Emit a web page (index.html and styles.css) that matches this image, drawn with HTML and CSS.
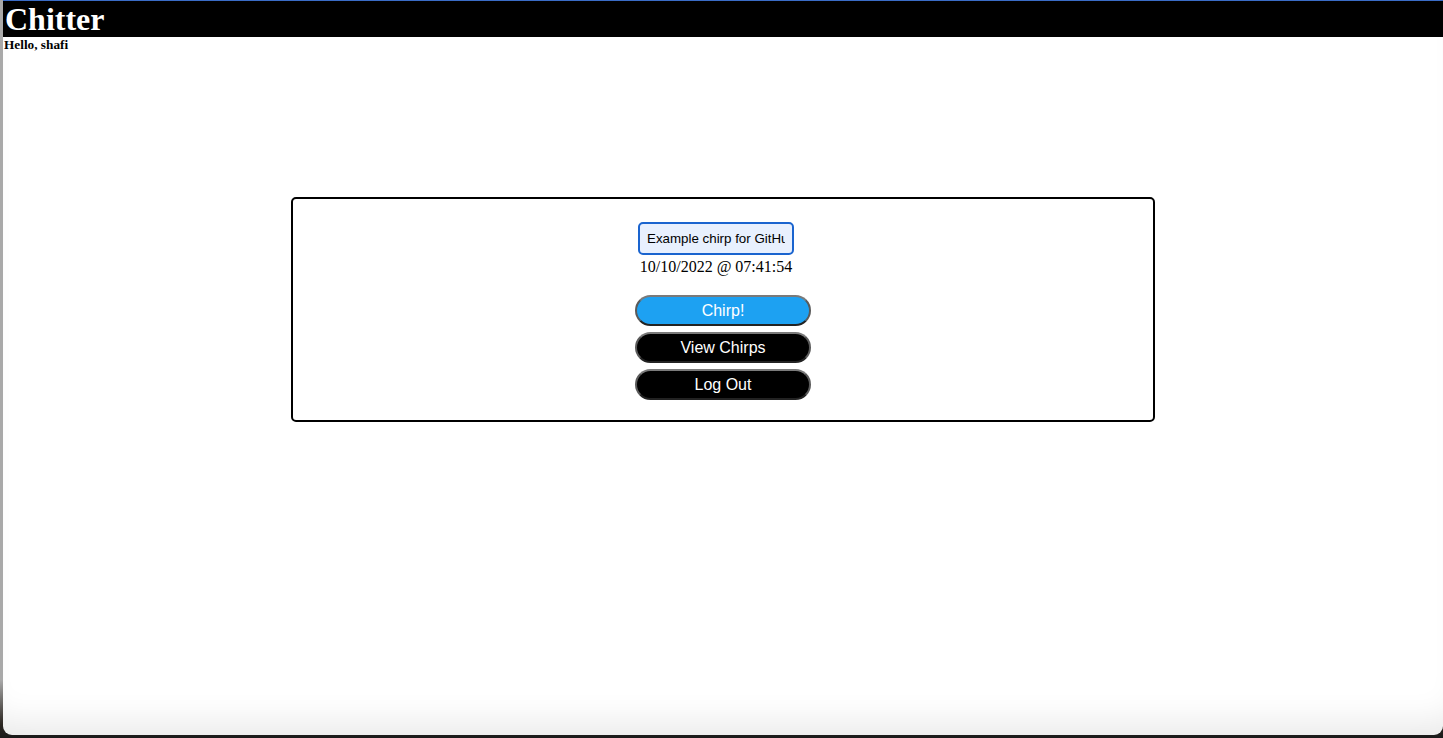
FILE: index.html
```html
<!DOCTYPE html>
<html>
<head>
<meta charset="utf-8">
<title>Chitter</title>
<link rel="stylesheet" href="styles.css">
</head>
<body>
<div class="desktop">
  <div class="window">
    <header class="topbar"><h1 class="brand">Chitter</h1></header>
    <h5 class="greeting">Hello, shafi</h5>
    <main class="card">
      <div class="compose">
        <input class="chirp-input" type="text" value="Example chirp for GitHub">
        <div class="stamp">10/10/2022 @ 07:41:54</div>
      </div>
      <div class="actions">
        <button class="btn btn-chirp">Chirp!</button>
        <button class="btn">View Chirps</button>
        <button class="btn">Log Out</button>
      </div>
    </main>
  </div>
</div>
</body>
</html>
```
FILE: styles.css
```css
html, body {
  margin: 0;
  padding: 0;
  height: 738px;
  overflow: hidden;
}
.desktop {
  height: 738px;
  display: flex;
  background: linear-gradient(to bottom, #a9a9a9 0, #a9a9a9 680px, #2a2520 725px, #1a1a1a 738px);
}
.window {
  margin-left: 3px;
  width: 1440px;
  height: 734px;
  border-top: 1px solid #3a6cc6;
  border-radius: 0 0 9px 9px;
  background: #fff;
  box-shadow: inset 0 -34px 34px -22px rgba(0, 0, 0, 0.09);
  display: flex;
  flex-direction: column;
  font-family: "Liberation Serif", "Times New Roman", serif;
}
.topbar {
  background: #000;
  height: 36px;
}
.brand {
  margin: 0;
  padding-left: 2px;
  color: #fff;
  font-size: 32px;
  line-height: 36px;
  font-weight: bold;
}
.greeting {
  margin: 0;
  padding-left: 1px;
  font-size: 13.28px;
  line-height: 16px;
  font-weight: bold;
}
.card {
  box-sizing: border-box;
  width: 60%;
  margin: 144px auto 0;
  border: 2px solid #000;
  border-radius: 5px;
  padding: 23px 0 20px;
  display: flex;
  flex-direction: column;
  align-items: center;
}
.compose {
  display: flex;
  flex-direction: column;
  align-items: center;
  margin-right: 14px;
}
.chirp-input {
  box-sizing: border-box;
  width: 156px;
  height: 33px;
  margin: 0;
  border: 2px solid #1a64cf;
  border-radius: 5px;
  background: #e8f0fe;
  padding: 1px 7px;
  font-family: "Liberation Sans", Arial, sans-serif;
  font-size: 13.33px;
  color: #000;
  outline: none;
}
.stamp {
  margin-top: 2px;
  font-size: 16px;
  line-height: 19px;
}
.actions {
  margin-top: 19px;
  display: flex;
  flex-direction: column;
  gap: 6px;
}
.btn {
  box-sizing: border-box;
  width: 176px;
  height: 31px;
  margin: 0;
  border: 2px solid;
  border-color: #7a7a7a #5a5a5a #222 #5a5a5a;
  border-radius: 16px;
  background: #000;
  color: #fff;
  font-family: "Liberation Sans", Arial, sans-serif;
  font-size: 16px;
  padding: 0;
}
.btn-chirp {
  background: #1da1f2;
}
```
